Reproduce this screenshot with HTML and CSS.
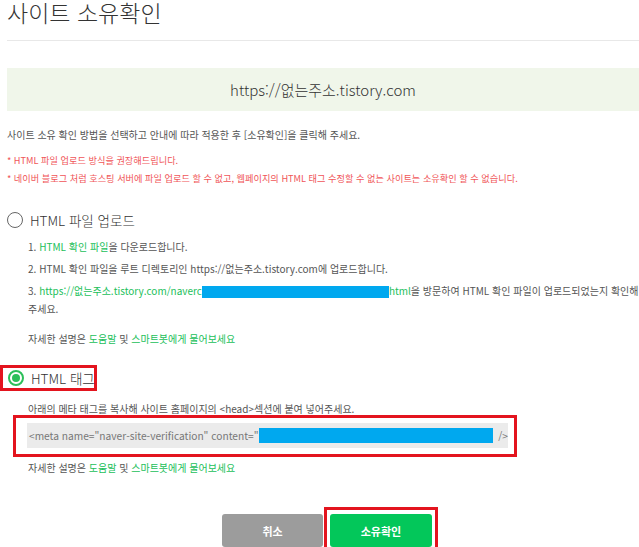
FILE: index.html
```html
<!DOCTYPE html>
<html lang="ko">
<head>
<meta charset="UTF-8">
<meta name="viewport" content="width=device-width, initial-scale=1.0">
<title>사이트 소유확인</title>
<link rel="stylesheet" href="styles.css">
</head>
<body>
<div class="page">
  <!-- Page header -->
  <div class="header">
    <h1 class="title">사이트 소유확인</h1>
  </div>

  <!-- Site address -->
  <div class="site-box">https://없는주소.tistory.com</div>

  <p class="desc">사이트 소유 확인 방법을 선택하고 안내에 따라 적용한 후 [소유확인]을 클릭해 주세요.</p>
  <p class="warn first">* HTML 파일 업로드 방식을 권장해드립니다.</p>
  <p class="warn">* 네이버 블로그 처럼 호스팅 서버에 파일 업로드 할 수 없고, 웹페이지의 HTML 태그 수정할 수 없는 사이트는 소유확인 할 수 없습니다.</p>

  <!-- Option 1: file upload -->
  <label class="option option-file">
    <span class="radio"></span>
    <span class="option-text">HTML 파일 업로드</span>
  </label>
  <ol class="steps">
    <li>1. <span class="link">HTML 확인 파일</span>을 다운로드합니다.</li>
    <li>2. HTML 확인 파일을 루트 디렉토리인 https://없는주소.tistory.com에 업로드합니다.</li>
    <li><span class="nowrap">3. <span class="link">https://없는주소.tistory.com/naverc<span class="mask mask-url"></span>html</span>을 방문하여 HTML 확인 파일이 업로드되었는지 확인해</span><br>주세요.</li>
  </ol>
  <p class="help">자세한 설명은 <span class="link">도움말</span> 및 <span class="link">스마트봇에게 물어보세요</span></p>

  <!-- Option 2: meta tag (selected) -->
  <div class="mark mark-option">
    <label class="option">
      <span class="radio checked"></span>
      <span class="option-text">HTML 태그</span>
    </label>
  </div>
  <p class="note">아래의 메타 태그를 복사해 사이트 홈페이지의 &lt;head&gt;섹션에 붙여 넣어주세요.</p>
  <div class="mark mark-code">
    <div class="code">&lt;meta name="naver-site-verification" content="<span class="mask mask-code"></span><span class="code-end">/&gt;</span></div>
  </div>
  <p class="help help-second">자세한 설명은 <span class="link">도움말</span> 및 <span class="link">스마트봇에게 물어보세요</span></p>

  <!-- Buttons -->
  <div class="actions">
    <button class="btn btn-cancel">취소</button>
    <div class="mark mark-btn">
      <button class="btn btn-ok">소유확인</button>
    </div>
  </div>
</div>
</body>
</html>
```

FILE: styles.css
```css
/* General styles */
body {
  margin: 0;
  font-family: "Noto Sans CJK KR", "Noto Sans", sans-serif;
  color: #555;
  background-color: #fff;
  overflow: hidden;
}

p {
  margin: 0;
}

/* Page container */
.page {
  padding-left: 7px;
}

/* Header with title */
.header {
  height: 40px;
  border-bottom: 1px solid #e8e8e8;
}

.title {
  margin: 0;
  font-size: 23px;
  line-height: 24px;
  font-weight: 300;
  color: #333;
}

/* Site address box */
.site-box {
  margin-top: 27px;
  height: 43px;
  line-height: 43px;
  background-color: #f0f6ea;
  text-align: center;
  font-size: 15px;
  color: #333;
  font-weight: 300;
}

/* Description texts */
.desc {
  margin-top: 16px;
  font-size: 10px;
  line-height: 16px;
  color: #555;
}

.warn {
  font-size: 9.2px;
  line-height: 18px;
  color: #f05558;
}

.warn.first {
  margin-top: 8px;
}

/* Radio options */
.option {
  display: flex;
  align-items: center;
  height: 20px;
  white-space: nowrap;
}

.option-file {
  margin-top: 23px;
}

.radio {
  width: 16px;
  height: 16px;
  border: 1px solid #666;
  border-radius: 50%;
  box-sizing: border-box;
  margin-right: 7px;
  position: relative;
  flex-shrink: 0;
}

.radio.checked {
  border: 2px solid #2cbf5a;
}

.radio.checked::after {
  content: "";
  position: absolute;
  left: 2px;
  top: 2px;
  width: 8px;
  height: 8px;
  border-radius: 50%;
  background-color: #2cbf5a;
}

.option-text {
  font-size: 13.5px;
  color: #333;
  font-weight: 300;
}

/* Step list */
.steps {
  list-style: none;
  margin: 8px 0 0;
  padding-left: 21px;
  font-size: 10px;
  line-height: 18px;
}

.steps li {
  margin-bottom: 4px;
}

.nowrap {
  white-space: nowrap;
}

.link {
  color: #22c05a;
}

/* Blue masks over hidden values */
.mask {
  display: inline-block;
  background-color: #00a8ef;
  vertical-align: middle;
}

.mask-url {
  width: 187px;
  height: 12px;
}

.mask-code {
  width: 235px;
  height: 15px;
}

/* Help lines */
.help {
  margin-top: 12px;
  padding-left: 21px;
  font-size: 10px;
  line-height: 18px;
}

.help-second {
  margin-top: 2px;
}

/* Red annotation marks */
.mark {
  border: 3px solid #e3141e;
  box-sizing: border-box;
}

.mark-option {
  margin-top: 17px;
  margin-left: -7px;
  width: 97px;
  height: 26px;
  padding-left: 5px;
  display: flex;
  align-items: center;
}

.note {
  margin-top: 10px;
  padding-left: 21px;
  font-size: 10px;
  line-height: 16px;
}

.mark-code {
  margin-top: -2px;
  margin-left: 6px;
  width: 504px;
  padding: 5px 6px 6px 11px;
}

.code {
  height: 25px;
  display: flex;
  align-items: center;
  background-color: #ebebeb;
  padding-left: 2px;
  font-size: 10.2px;
  color: #777;
  white-space: nowrap;
}

.code-end {
  margin-left: 5px;
}

/* Action buttons */
.actions {
  display: flex;
  justify-content: center;
  align-items: flex-start;
  margin-top: 30px;
  padding-left: 14px;
}

.btn {
  border: none;
  border-radius: 3px;
  height: 33px;
  color: #fff;
  font-family: "Noto Sans CJK KR", sans-serif;
  font-weight: bold;
  font-size: 11px;
}

.btn-cancel {
  width: 101px;
  background-color: #9c9c9c;
  margin-right: 1px;
  margin-top: 7px;
}

.btn-ok {
  width: 102px;
  background-color: #03c75a;
}

.mark-btn {
  padding: 4px 3px 10px;
}
```
